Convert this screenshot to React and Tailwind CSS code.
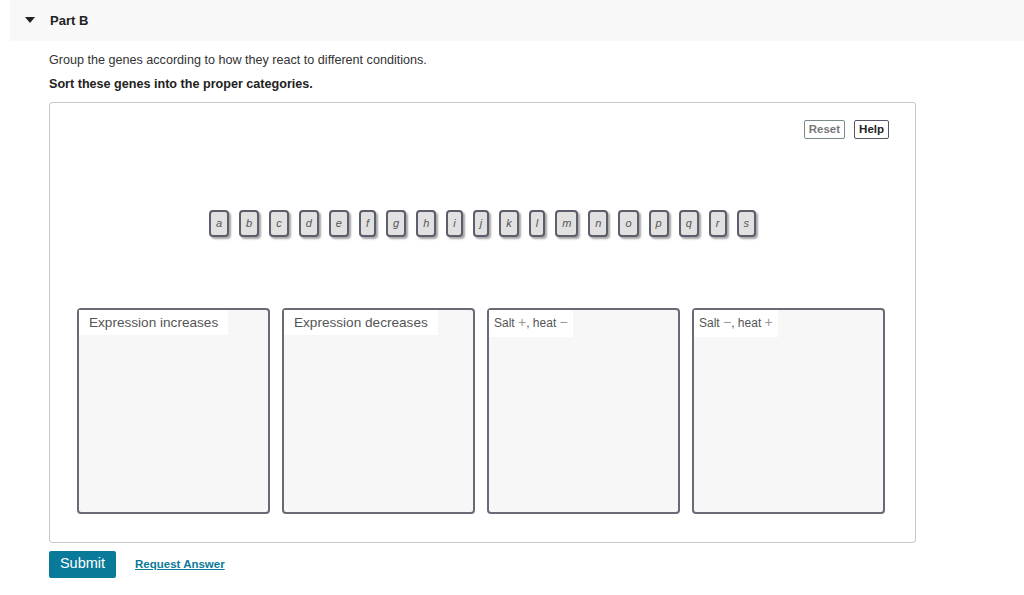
import { useState } from "react";

const genes = "abcdefghijklmnopqrs".split("");

function Tile({ letter }) {
  return (
    <div className="h-[27px] min-w-[16px] px-[5px] flex items-center justify-center rounded-[4px] border-2 border-[#5d5d6b] bg-[#e1e1e1] shadow-[2px_2px_2px_rgba(0,0,0,0.35)] text-[11px] italic text-[#555]">
      {letter}
    </div>
  );
}

function Bin({ children, small }) {
  return (
    <div className="w-[193px] h-[206px] rounded-[4px] border-2 border-[#6a6a76] bg-[#f7f7f7] flex flex-col items-start">
      <div
        className={
          small
            ? "bg-white px-[5px] pt-[2px] pb-[4px] text-[12px] text-[#555]"
            : "bg-white px-[10px] pt-[3px] pb-[2px] text-[13.6px] text-[#555]"
        }
      >
        {children}
      </div>
    </div>
  );
}

export default function App() {
  const [open, setOpen] = useState(true);

  return (
    <div className="w-[1024px] h-[595px] bg-white font-['Liberation_Sans',Arial,sans-serif] text-[#222]">
      <div
        className="ml-[10px] h-[41px] bg-[#f8f8f8] flex items-center cursor-pointer"
        onClick={() => setOpen(!open)}
      >
        <svg width="10" height="6" viewBox="0 0 10 6" className="ml-[15px] mt-[-2px]">
          <path d="M0 0 L10 0 L5 6 Z" fill="#222" />
        </svg>
        <span className="ml-[15px] text-[13px] font-bold text-[#222]">Part B</span>
      </div>

      {open && (
        <div className="pl-[49px]">
          <p className="mt-[10px] text-[12.6px] text-[#333]">
            Group the genes according to how they react to different conditions.
          </p>
          <p className="mt-[5px] text-[12.6px] font-bold text-[#222]">
            Sort these genes into the proper categories.
          </p>

          <div className="mt-[8px] w-[867px] h-[441px] rounded-[3px] border border-[#c8c8c8] flex flex-col">
            <div className="flex justify-end gap-[9px] pt-[17px] pr-[26px]">
              <button className="h-[19px] px-[4px] rounded-[2px] border border-[#7a8a8a] bg-white text-[11.5px] font-bold text-[#777]">
                Reset
              </button>
              <button className="h-[19px] px-[4px] rounded-[2px] border border-[#556] bg-white text-[11.5px] font-bold text-[#222]">
                Help
              </button>
            </div>

            <div className="mt-[71px] flex justify-center gap-[10px]">
              {genes.map((g) => (
                <Tile key={g} letter={g} />
              ))}
            </div>

            <div className="mt-[71px] flex gap-[12px] pl-[27px]">
              <Bin>Expression increases</Bin>
              <Bin>Expression decreases</Bin>
              <Bin small>
                Salt <span className="text-[14px] text-[#999]">+</span>, heat{" "}
                <span className="text-[14px] text-[#999]">−</span>
              </Bin>
              <Bin small>
                Salt <span className="text-[14px] text-[#999]">−</span>, heat{" "}
                <span className="text-[14px] text-[#999]">+</span>
              </Bin>
            </div>
          </div>

          <div className="mt-[8px] flex items-center">
            <button className="w-[67px] h-[27px] rounded-[2px] bg-[#0a7a9a] text-white text-[14.5px]">
              Submit
            </button>
            <a
              href="#"
              className="ml-[19px] text-[11.5px] font-bold text-[#0a7a9a] underline"
            >
              Request Answer
            </a>
          </div>
        </div>
      )}
    </div>
  );
}
